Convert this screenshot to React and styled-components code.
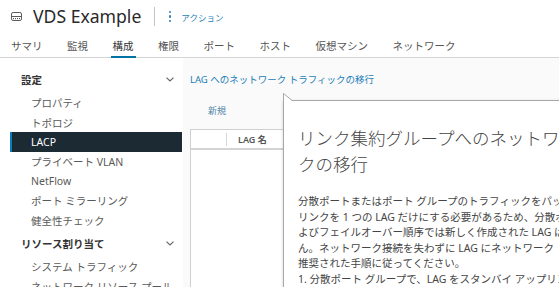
import React from "react";
import styled, { createGlobalStyle } from "styled-components";

const FONT = `"Noto Sans", "Noto Sans CJK JP", sans-serif`;

const Global = createGlobalStyle`
  html, body { margin: 0; padding: 0; overflow: hidden; background: #fff; }
  body { font-family: ${FONT}; }
  * { box-sizing: border-box; }
`;

const Page = styled.div`
  width: 559px;
  height: 287px;
  overflow: hidden;
  display: flex;
  flex-direction: column;
  background: #fff;
`;

const Header = styled.header`
  height: 33px;
  flex-shrink: 0;
  display: flex;
  align-items: center;
  padding-left: 11px;
`;

const Title = styled.h1`
  margin: 0 0 0 11px;
  font-size: 17.6px;
  font-weight: 400;
  line-height: 1;
  color: #2a2a2a;
`;

const VDivider = styled.span`
  width: 1px;
  height: 19px;
  margin-left: 13px;
  background: #c4c4c4;
`;

const ActionsButton = styled.button`
  display: flex;
  align-items: center;
  gap: 10px;
  margin-left: 14px;
  padding: 0;
  border: 0;
  background: none;
  font-family: ${FONT};
  font-size: 8.5px;
  color: #2a7fb5;
`;

const Dots = styled.span`
  display: flex;
  flex-direction: column;
  gap: 2.2px;
  & > i {
    width: 2px;
    height: 2.4px;
    background: #2a7fb5;
    border-radius: 1px;
  }
`;

const TabBar = styled.nav`
  height: 25px;
  flex-shrink: 0;
  display: flex;
  gap: 20.5px;
  padding-left: 9px;
  border-bottom: 1px solid #d4d4d4;
`;

const Tab = styled.a`
  height: 25px;
  margin-bottom: -1px;
  display: flex;
  align-items: center;
  padding: 1px 2px 0;
  font-size: 10.5px;
  color: ${(p) => (p.$active ? "#333" : "#555")};
  border-bottom: 2px solid ${(p) => (p.$active ? "#0072a3" : "transparent")};
  text-decoration: none;
  white-space: nowrap;
`;

const Body = styled.div`
  flex: 1;
  min-height: 0;
  display: flex;
`;

const Sidebar = styled.aside`
  width: 183px;
  flex-shrink: 0;
  padding-top: 10px;
  background: #fff;
`;

const SectionHeader = styled.div`
  height: 22px;
  display: flex;
  align-items: center;
  justify-content: space-between;
  padding: 0 9px 0 21px;
  font-size: 10.5px;
  font-weight: 700;
  color: #333;
`;

const NavList = styled.ul`
  list-style: none;
  margin: 0;
  padding: 3px 0 2px;
`;

const NavItem = styled.li`
  height: 19.6px;
  width: 172px;
  margin-left: 10px;
  padding-left: 21px;
  display: flex;
  align-items: center;
  font-size: 10.5px;
  white-space: nowrap;
  color: ${(p) => (p.$selected ? "#fff" : "#5a5a5a")};
  background: ${(p) => (p.$selected ? "#1c2a33" : "transparent")};
  box-shadow: ${(p) => (p.$selected ? "inset 2px 0 0 #0a7cb8" : "none")};
`;

const Main = styled.main`
  flex: 1;
  position: relative;
  display: flex;
  flex-direction: column;
  padding-left: 7px;
  background: #fafafa;
`;

const Breadcrumb = styled.a`
  margin-top: 15px;
  line-height: 14px;
  font-size: 9.5px;
  color: #1b7db8;
  white-space: nowrap;
`;

const ActionBar = styled.div`
  margin-top: 13px;
  height: 20px;
  display: flex;
  align-items: center;
  padding-left: 18px;
`;

const FlatButton = styled.button`
  padding: 0;
  border: 0;
  background: none;
  font-family: ${FONT};
  font-size: 9px;
  color: #4f86a8;
`;

const Table = styled.div`
  margin-top: 9px;
  flex: 1;
  background: #fff;
  border-left: 1px solid #d0d0d0;
  border-top: 1px solid #d0d0d0;
`;

const TableHead = styled.div`
  height: 20px;
  display: flex;
  align-items: center;
  border-bottom: 2px solid #d3d3d3;
`;

const SelectCell = styled.div`
  width: 35px;
  height: 100%;
`;

const ColSep = styled.span`
  width: 1px;
  height: 13px;
  background: #d6d6d6;
`;

const HeadCell = styled.div`
  padding-left: 11px;
  font-size: 9px;
  font-weight: 600;
  color: #555;
  white-space: nowrap;
`;

const Popover = styled.section`
  position: absolute;
  left: 100px;
  top: 42px;
  width: 440px;
  bottom: -60px;
  background: #fff;
  border: 1px solid #a8a8a8;
  box-shadow: 0 1px 3px rgba(0, 0, 0, 0.18);
  padding: 24px 0 0 14px;
`;

const Pointer = styled.svg`
  position: absolute;
  left: -1px;
  top: -8px;
  overflow: visible;
`;

const PopTitle = styled.h2`
  margin: 0;
  font-size: 17.5px;
  font-weight: 300;
  line-height: 26px;
  color: #444;
  white-space: nowrap;
`;

const PopText = styled.p`
  margin: 17px 0 0;
  font-size: 10.5px;
  line-height: 15.5px;
  color: #454545;
  white-space: nowrap;
`;

const SwitchIcon = () => (
  <svg width="11" height="9" viewBox="0 0 11 9" fill="none" stroke="#5a5a5a" strokeWidth="1">
    <rect x="0.5" y="0.5" width="10" height="8" rx="1.6" />
    <path d="M0.5 4.5h10" />
    <path d="M2.5 6v1.2M4.5 6v1.2M6.5 6v1.2M8.5 6v1.2" />
  </svg>
);

const Chevron = () => (
  <svg width="8" height="5" viewBox="0 0 8 5" fill="none" stroke="#666" strokeWidth="1.2">
    <path d="M0.5 0.6 L4 4 L7.5 0.6" />
  </svg>
);

const tabs = ["サマリ", "監視", "構成", "権限", "ポート", "ホスト", "仮想マシン", "ネットワーク"];
const settings = ["プロパティ", "トポロジ", "LACP", "プライベート VLAN", "NetFlow", "ポート ミラーリング", "健全性チェック"];
const resources = ["システム トラフィック", "ネットワーク リソース プール"];

export default function App() {
  return (
    <>
      <Global />
      <Page>
        <Header>
          <SwitchIcon />
          <Title>VDS Example</Title>
          <VDivider />
          <ActionsButton>
            <Dots>
              <i />
              <i />
              <i />
            </Dots>
            アクション
          </ActionsButton>
        </Header>
        <TabBar>
          {tabs.map((t) => (
            <Tab key={t} $active={t === "構成"}>
              {t}
            </Tab>
          ))}
        </TabBar>
        <Body>
          <Sidebar>
            <SectionHeader>
              設定
              <Chevron />
            </SectionHeader>
            <NavList>
              {settings.map((s) => (
                <NavItem key={s} $selected={s === "LACP"}>
                  {s}
                </NavItem>
              ))}
            </NavList>
            <SectionHeader>
              リソース割り当て
              <Chevron />
            </SectionHeader>
            <NavList>
              {resources.map((s) => (
                <NavItem key={s}>{s}</NavItem>
              ))}
            </NavList>
          </Sidebar>
          <Main>
            <Breadcrumb>LAG へのネットワーク トラフィックの移行</Breadcrumb>
            <ActionBar>
              <FlatButton>新規</FlatButton>
            </ActionBar>
            <Table>
              <TableHead>
                <SelectCell />
                <ColSep />
                <HeadCell>LAG 名</HeadCell>
              </TableHead>
            </Table>
            <Popover>
              <Pointer width="10" height="9" viewBox="0 0 10 9">
                <path d="M0.5 0.5 L9.5 8 L9.5 9 L0.5 9 Z" fill="#fff" />
                <path d="M0.5 9 L0.5 0.5 L9.5 7.8" fill="none" stroke="#a8a8a8" strokeWidth="1" />
              </Pointer>
              <PopTitle>
                リンク集約グループへのネットワー
                <br />
                クの移行
              </PopTitle>
              <PopText>
                分散ポートまたはポート グループのトラフィックをパッシブ モードの LAG に移行する際、チーミングお
                <br />
                リンクを 1 つの LAG だけにする必要があるため、分散ポート グループのチーミングお
                <br />
                よびフェイルオーバー順序では新しく作成された LAG はスタンバイ状態である必要がありませ
                <br />
                ん。ネットワーク接続を失わずに LAG にネットワーク トラフィックを移行するには、以下の
                <br />
                推奨された手順に従ってください。
                <br />
                1. 分散ポート グループで、LAG をスタンバイ アップリンクとして設定します。
              </PopText>
            </Popover>
          </Main>
        </Body>
      </Page>
    </>
  );
}
